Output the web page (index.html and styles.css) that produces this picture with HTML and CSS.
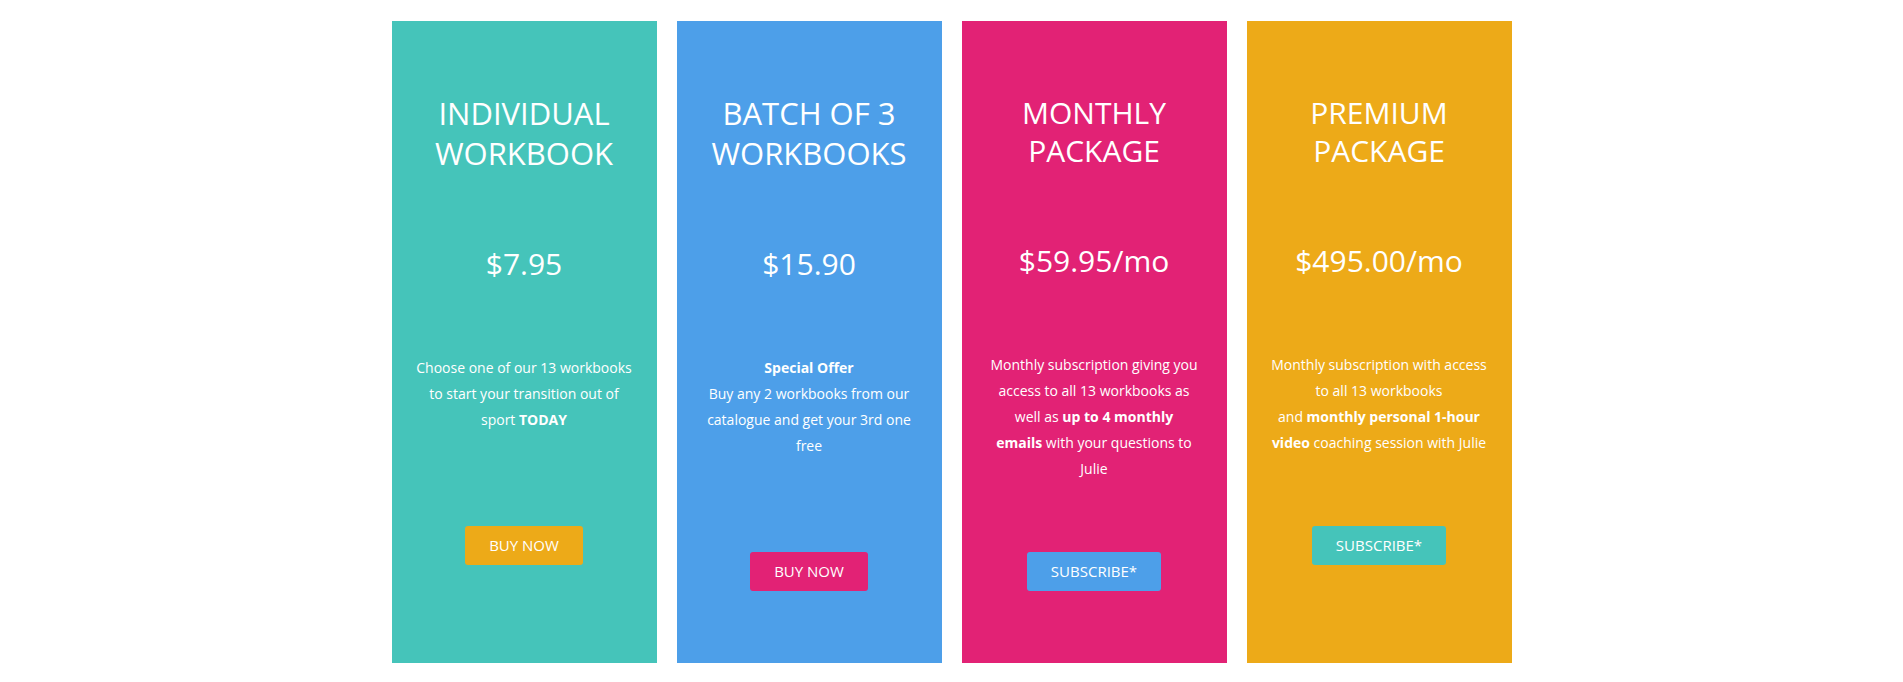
FILE: index.html
```html
<!DOCTYPE html>
<html lang="en">
<head>
<meta charset="utf-8">
<title>Pricing</title>
<link rel="stylesheet" href="styles.css">
</head>
<body>
<section class="pricing">
  <article class="plan plan--teal">
    <h2 class="plan-title">Individual workbook</h2>
    <div class="plan-price">$7.95</div>
    <p class="plan-desc">Choose one of our 13 workbooks to start your transition out of sport <strong>TODAY</strong></p>
    <a class="plan-btn btn--orange" href="#">Buy now</a>
  </article>
  <article class="plan plan--blue">
    <h2 class="plan-title">Batch of 3 workbooks</h2>
    <div class="plan-price">$15.90</div>
    <p class="plan-desc"><strong>Special Offer</strong><br>Buy any 2 workbooks from our catalogue and get your 3rd one free</p>
    <a class="plan-btn btn--pink" href="#">Buy now</a>
  </article>
  <article class="plan plan--pink plan--sub">
    <h2 class="plan-title">Monthly package</h2>
    <div class="plan-price">$59.95/mo</div>
    <p class="plan-desc">Monthly subscription giving you access to all 13 workbooks as well as <strong>up to 4 monthly<br>emails</strong> with your questions to Julie</p>
    <a class="plan-btn btn--blue" href="#">Subscribe*</a>
  </article>
  <article class="plan plan--orange plan--sub">
    <h2 class="plan-title">Premium package</h2>
    <div class="plan-price">$495.00/mo</div>
    <p class="plan-desc">Monthly subscription with access to all 13 workbooks<br>and <strong>monthly personal 1-hour video</strong> coaching session with Julie</p>
    <a class="plan-btn btn--teal" href="#">Subscribe*</a>
  </article>
</section>
</body>
</html>
```
FILE: styles.css
```css
* { box-sizing: border-box; }

html, body {
  margin: 0;
  padding: 0;
  background: #ffffff;
}

body {
  font-family: "Open Sans", "Noto Sans", sans-serif;
  color: #ffffff;
}

.pricing {
  display: flex;
  justify-content: center;
  gap: 20px;
  padding-top: 21px;
}

.plan {
  width: 265px;
  height: 642px;
  padding: 72px 24px 0;
  display: flex;
  flex-direction: column;
  align-items: center;
  text-align: center;
}

.plan--sub { padding-top: 73px; }

.plan--teal { background: #45c4ba; }
.plan--blue { background: #4d9fe9; }
.plan--pink { background: #e22275; }
.plan--orange { background: #edaa18; }

.plan-title {
  margin: 0;
  font-size: 31px;
  line-height: 40px;
  font-weight: 400;
  text-transform: uppercase;
}

.plan--sub .plan-title {
  font-size: 30px;
  line-height: 38px;
}

.plan-price {
  margin-top: 71px;
  font-size: 30px;
  line-height: 40px;
}

.plan-desc {
  margin: 71px 0 0;
  font-size: 14px;
  line-height: 26px;
}

.plan-desc strong { font-weight: 700; }

.plan-btn {
  margin-top: 93px;
  padding: 10px 24px;
  font-size: 15px;
  line-height: 19px;
  color: #ffffff;
  text-decoration: none;
  text-transform: uppercase;
  border-radius: 3px;
}

.plan--sub .plan-btn { margin-top: 70px; }

.btn--orange { background: #edaa18; }
.btn--pink { background: #e22275; }
.btn--blue { background: #4d9fe9; }
.btn--teal { background: #45c4ba; }
```
